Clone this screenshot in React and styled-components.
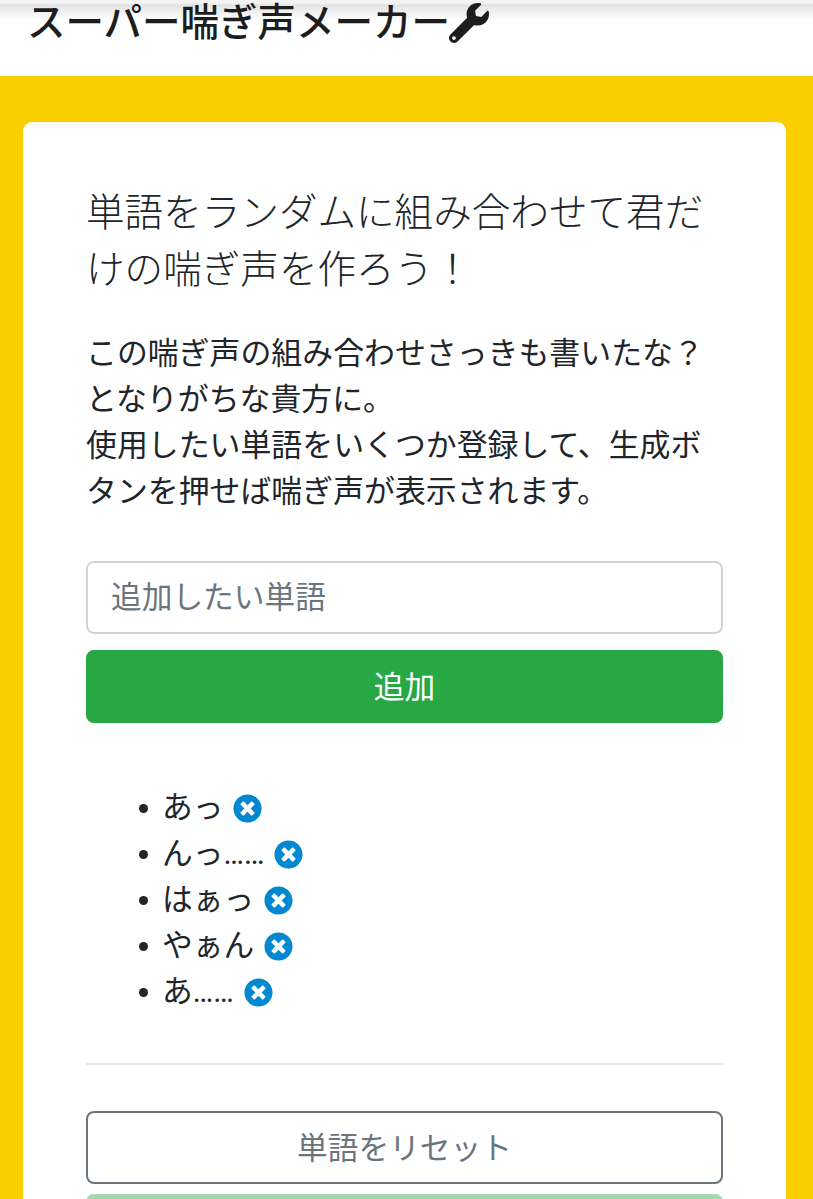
import React from 'react';
import styled, { createGlobalStyle } from 'styled-components';
import { FaWrench, FaTimesCircle } from 'react-icons/fa';

const GlobalStyle = createGlobalStyle`
  html, body {
    margin: 0;
    padding: 0;
    height: 100%;
    overflow: hidden;
  }
  body {
    background: #fbce00;
    color: #212529;
    font-family: Roboto, "Noto Sans CJK JP", sans-serif;
  }
  * {
    box-sizing: border-box;
  }
`;

const Page = styled.div`
  height: 1199px;
  overflow: hidden;
`;

const Header = styled.header`
  position: relative;
  height: 76px;
  padding: 3px 0 0 27px;
  background: #fff;
  overflow: hidden;

  &::before {
    content: '';
    position: absolute;
    top: 0;
    left: 0;
    right: 0;
    height: 20px;
    background: linear-gradient(#f3f3f3 0, #f3f3f3 3px, #e3e3e3 5px, rgba(255, 255, 255, 0) 100%);
  }
`;

const Title = styled.h1`
  position: relative;
  display: flex;
  align-items: center;
  margin: 0;
  font-size: 38.5px;
  line-height: 38px;
  font-weight: 500;
  color: #1d1d1f;

  svg {
    margin-left: -1px;
  }
`;

const Main = styled.main`
  padding: 46px 27px 0 23px;
`;

const Card = styled.section`
  background: #fff;
  border-radius: 9px;
  padding: 62px 63px 0;
`;

const Lead = styled.p`
  margin: 0 0 33px;
  font-size: 38.6px;
  line-height: 57px;
  font-weight: 300;
`;

const Text = styled.p`
  margin: 0 0 46px;
  font-size: 30.9px;
  line-height: 46px;
`;

const Field = styled.input`
  display: block;
  width: 100%;
  height: 73px;
  padding: 0 23px;
  border: 2px solid #ced4da;
  border-radius: 8px;
  background: #fff;
  font: inherit;
  font-size: 30.7px;
  color: #212529;

  &::placeholder {
    color: #6c757d;
    opacity: 1;
  }
`;

const Button = styled.button`
  display: block;
  width: 100%;
  height: 73px;
  margin-top: ${(props) => props.$top}px;
  padding: 0 0 4px;
  border: 2px solid ${(props) => props.$border};
  border-radius: 8px;
  background: ${(props) => props.$bg};
  color: ${(props) => props.$color};
  font: inherit;
  font-size: 30.7px;
`;

const WordList = styled.ul`
  margin: 62px 0 48px;
  padding: 0 0 0 53px;
  list-style: none;
  font-size: 30.7px;
  line-height: 46px;
`;

const Word = styled.li`
  display: flex;
  align-items: center;
  height: 46px;

  &::before {
    content: '';
    width: 9px;
    height: 9px;
    margin-right: 14px;
    border-radius: 50%;
    background: #212529;
  }
`;

const RemoveIcon = styled(FaTimesCircle)`
  margin-left: 10px;
  width: 29px;
  height: 29px;
  color: #0288d1;
`;

const Rule = styled.hr`
  margin: 0 0 46px;
  border: 0;
  border-top: 2px solid #e5e7e8;
`;

const words = ['あっ', 'んっ……', 'はぁっ', 'やぁん', 'あ……'];

function App() {
  return (
    <Page>
      <GlobalStyle />
      <Header>
        <Title>
          スーパー喘ぎ声メーカー
          <FaWrench size={40} />
        </Title>
      </Header>
      <Main>
        <Card>
          <Lead>単語をランダムに組み合わせて君だけの喘ぎ声を作ろう！</Lead>
          <Text>
            この喘ぎ声の組み合わせさっきも書いたな？
            <br />
            となりがちな貴方に。
            <br />
            使用したい単語をいくつか登録して、生成ボタンを押せば喘ぎ声が表示されます。
          </Text>
          <Field placeholder="追加したい単語" />
          <Button $top={16} $bg="#28a745" $border="#28a745" $color="#fff">
            追加
          </Button>
          <WordList>
            {words.map((word) => (
              <Word key={word}>
                <span>{word}</span>
                <RemoveIcon />
              </Word>
            ))}
          </WordList>
          <Rule />
          <Button $top={0} $bg="#fff" $border="#6c757d" $color="#6c757d">
            単語をリセット
          </Button>
          <Button $top={10} $bg="#a3d9ae" $border="#a3d9ae" $color="#fff" />
        </Card>
      </Main>
    </Page>
  );
}

export default App;
